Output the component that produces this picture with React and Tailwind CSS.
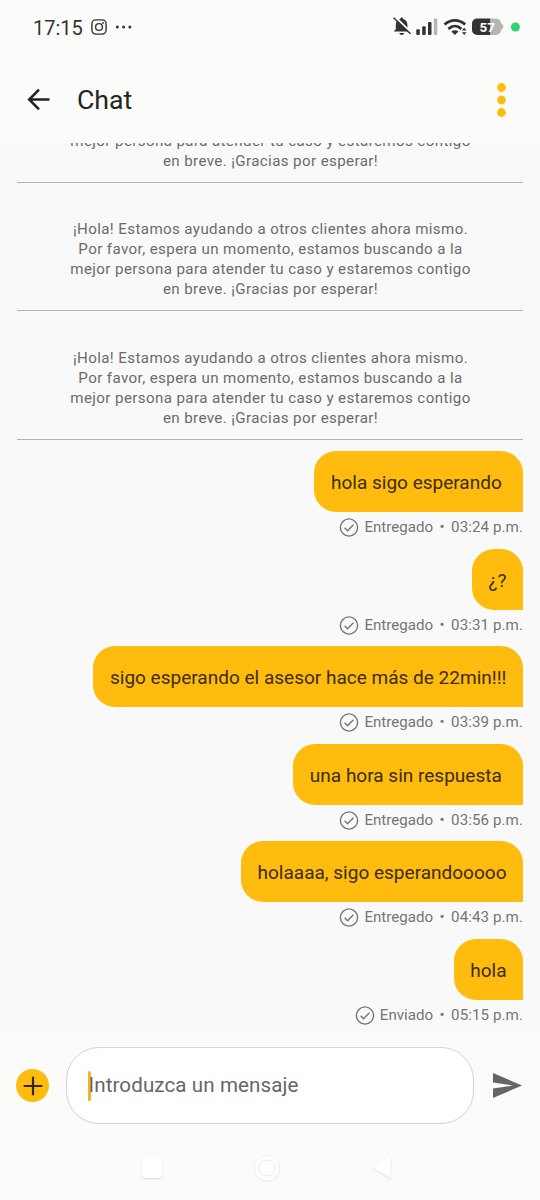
const messages = [
  { text: 'hola sigo esperando ', status: 'Entregado', time: '03:24 p.m.' },
  { text: '¿?', status: 'Entregado', time: '03:31 p.m.' },
  { text: 'sigo esperando el asesor hace más de 22min!!!', status: 'Entregado', time: '03:39 p.m.' },
  { text: 'una hora sin respuesta ', status: 'Entregado', time: '03:56 p.m.' },
  { text: 'holaaaa, sigo esperandooooo', status: 'Entregado', time: '04:43 p.m.' },
  { text: 'hola', status: 'Enviado', time: '05:15 p.m.' },
];

const noticeLines = [
  '¡Hola! Estamos ayudando a otros clientes ahora mismo.',
  'Por favor, espera un momento, estamos buscando a la',
  'mejor persona para atender tu caso y estaremos contigo',
  'en breve. ¡Gracias por esperar!',
];

function StatusBar() {
  return (
    <div className="flex h-[54px] shrink-0 items-center justify-between pr-[20px] pl-[33px] text-[#333]">
      <div className="flex items-center">
        <span className="w-[58px] pt-[2px] text-[20px] leading-none">17:15</span>
        <svg className="h-4 w-4" viewBox="0 0 16 16" fill="none" stroke="currentColor" strokeWidth="1.4">
          <rect x="0.9" y="0.9" width="14.2" height="14.2" rx="4" />
          <circle cx="8" cy="8" r="3.4" />
          <circle cx="12" cy="4" r="0.9" fill="currentColor" stroke="none" />
        </svg>
        <svg className="ml-2 h-4 w-[18px]" viewBox="0 0 18 16" fill="currentColor">
          <circle cx="2.3" cy="8" r="1.5" />
          <circle cx="8.6" cy="8" r="1.5" />
          <circle cx="14.9" cy="8" r="1.5" />
        </svg>
      </div>
      <svg className="h-[20px] w-[128px]" viewBox="392 17 128 20" fill="#333">
        <path d="M401.7 17.600c.9 0 1.400.6 1.400 1.300 2.700.7 4.300 2.800 4.300 5.700v4.600l1.600 1.800v.6H394v-.6l1.800-1.800v-4.600c0-2.900 1.700-5 4.500-5.700 0-.7.500-1.300 1.400-1.300z" />
        <path d="M399.300 33h4.800c-.2 1.200-1.200 2-2.400 2s-2.200-.8-2.400-2z" />
        <path d="M394.800 16.600l17 16.600" stroke="#fbfbf9" strokeWidth="2" />
        <path d="M393.600 17.800l16.800 16" stroke="#333" strokeWidth="1.500" />
        <rect x="416.300" y="29.300" width="3.500" height="5.700" rx="1" />
        <rect x="422.200" y="26.300" width="3.500" height="8.700" rx="1" />
        <rect x="428" y="22" width="3.500" height="13" rx="1" />
        <rect x="433.800" y="18.500" width="3.500" height="16.500" rx="1" fill="#b5b5b5" />
        <g fill="none" stroke="#333" strokeWidth="2.700">
          <path d="M444.500 24.600c6-5.600 14.700-5.600 20.700 0" />
          <path d="M448.300 29c4-3.700 9.200-3.700 13.200 0" />
        </g>
        <path d="M451.300 31.400c2-1.700 5.200-1.700 7.200 0l-3.600 3.600z" />
        <path d="M461.800 30.600l2.400-2.900 2.400 2.900zM461.800 32.200l2.400 2.900 2.400-2.900z" />
        <path d="M477 18.500h13.500V35H477a5 5 0 0 1-5-5v-6.500a5 5 0 0 1 5-5z" />
        <path d="M490.500 18.500h5.500a5 5 0 0 1 5 5c3 1 3 5.500 0 6.500a5 5 0 0 1-5 5h-5.500z" fill="#b5b5b5" />
        <text x="479.500" y="31.800" fill="#fff" fontSize="13.400" fontWeight="700" fontFamily="Roboto, sans-serif">57</text>
        <circle cx="515.400" cy="27" r="4.500" fill="#31d36b" />
      </svg>
    </div>
  );
}

function Header() {
  return (
    <header className="flex h-[89px] shrink-0 items-center justify-between pr-[34px] pl-[27px]">
      <div className="flex items-center gap-[27px]">
        <svg className="h-[24px] w-[23px]" viewBox="0 0 23 24" fill="none" stroke="#222" strokeWidth="2.500">
          <path d="M22.500 12.500H2.500M12 2.700L2.200 12.500l9.800 9.800" />
        </svg>
        <h1 className="pt-[3px] text-[26.700px] leading-8 text-[#242424]">Chat</h1>
      </div>
      <svg className="mt-[2px] h-[34px] w-[9px]" viewBox="0 0 9 34" fill="#ffbc0e">
        <circle cx="4.500" cy="4.500" r="4.400" />
        <circle cx="4.500" cy="17" r="4.400" />
        <circle cx="4.500" cy="29.500" r="4.400" />
      </svg>
    </header>
  );
}

function Notice({ lines = noticeLines }) {
  return (
    <div className="flex h-[128.500px] shrink-0 flex-col justify-end border-b-[1.500px] border-[#b3b3b3] pb-[11px] pl-[1.500px] text-center text-[15.125px] leading-[20px] tracking-[0.390px] text-[#6b6b6b]">
      {lines.map((line) => (
        <p key={line} className="whitespace-nowrap">{line}</p>
      ))}
    </div>
  );
}

function Message({ text, status, time }) {
  return (
    <div className="flex h-[97.500px] shrink-0 flex-col items-end">
      <p className="flex h-[61px] items-center rounded-t-[22px] rounded-bl-[22px] bg-[#ffbc0e] px-[16.500px] pt-[4px] text-[19.030px] whitespace-pre text-[#3b2c08]">
        {text}
      </p>
      <div className="mt-[5px] flex h-5 items-center text-[15.125px] whitespace-nowrap text-[#757575]">
        <svg className="mr-[5px] h-5 w-5" viewBox="0 0 20 20" fill="none" stroke="#757575" strokeWidth="1.400">
          <circle cx="10" cy="10.500" r="8.600" />
          <path d="M5.600 10.700l3 3 5.800-6" />
        </svg>
        <span className="pt-px">{status}</span>
        <span className="w-[18px] pt-px text-center">•</span>
        <span className="pt-px tracking-[0.080px]">{time}</span>
      </div>
    </div>
  );
}

function Composer() {
  return (
    <div className="flex h-[107px] shrink-0 items-center pl-[16px]">
      <button className="flex h-[33px] w-[33px] items-center justify-center rounded-full bg-[#ffbc0e]">
        <svg className="h-5 w-5" viewBox="0 0 20 20" stroke="#33270c" strokeWidth="2.200">
          <path d="M10 .7v18.600M.7 10h18.600" />
        </svg>
      </button>
      <div className="ml-[17px] flex h-[77px] w-[408px] items-center rounded-[33px] border-[1.500px] border-[#d2d2d2] bg-white pl-[21px]">
        <span className="h-[30px] w-[2.500px] rounded-full bg-[#f5b51b]" />
        <span className="-ml-[2px] text-[20.600px] tracking-[0.090px] text-[#666]">Introduzca un mensaje</span>
      </div>
      <svg className="ml-[19px] h-[25px] w-[29px]" viewBox="0 0 29 25" fill="#656565">
        <path d="M0 0l29 12.500L0 25v-9.600l20-2.900L0 9.600z" />
      </svg>
    </div>
  );
}

function NavigationBar() {
  return (
    <nav className="flex h-[61px] shrink-0 items-center pb-[3px] pl-[142px]">
      <span className="h-5 w-5 rounded-[3px] bg-white shadow-[0_1px_2px_rgba(0,0,0,0.12)]" />
      <svg className="ml-[91px] h-7 w-7" viewBox="0 0 28 28" fill="none">
        <circle cx="14" cy="14.500" r="12.800" stroke="#e9e9e7" strokeWidth="1" />
        <circle cx="14" cy="14" r="10.500" stroke="#fff" strokeWidth="3.500" />
        <circle cx="14" cy="14" r="8" fill="#fff" stroke="#ececea" strokeWidth="1" />
      </svg>
      <svg className="ml-[90px] h-6 w-6" viewBox="0 0 24 24">
        <path d="M3 13L19.500 23L20 3" fill="none" stroke="#ebebe9" strokeWidth="1.500" strokeLinecap="round" strokeLinejoin="round" />
        <path d="M2.500 12L19.500 1.500V22z" fill="#fff" />
      </svg>
    </nav>
  );
}

export default function App() {
  return (
    <div className="flex h-[1200px] w-[540px] flex-col overflow-hidden bg-[#fbfbf9] font-['Roboto',sans-serif]">
      <StatusBar />
      <Header />
      <main className="flex h-[889px] shrink-0 flex-col justify-end overflow-hidden bg-[#f9f9f9] pr-[17px] pl-[16.500px]">
        <Notice lines={noticeLines.slice(2)} />
        <Notice />
        <Notice />
        <div className="-mb-[4px] flex shrink-0 flex-col pt-[11.500px]">
          {messages.map((message) => (
            <Message key={message.time} {...message} />
          ))}
        </div>
      </main>
      <Composer />
      <NavigationBar />
    </div>
  );
}
